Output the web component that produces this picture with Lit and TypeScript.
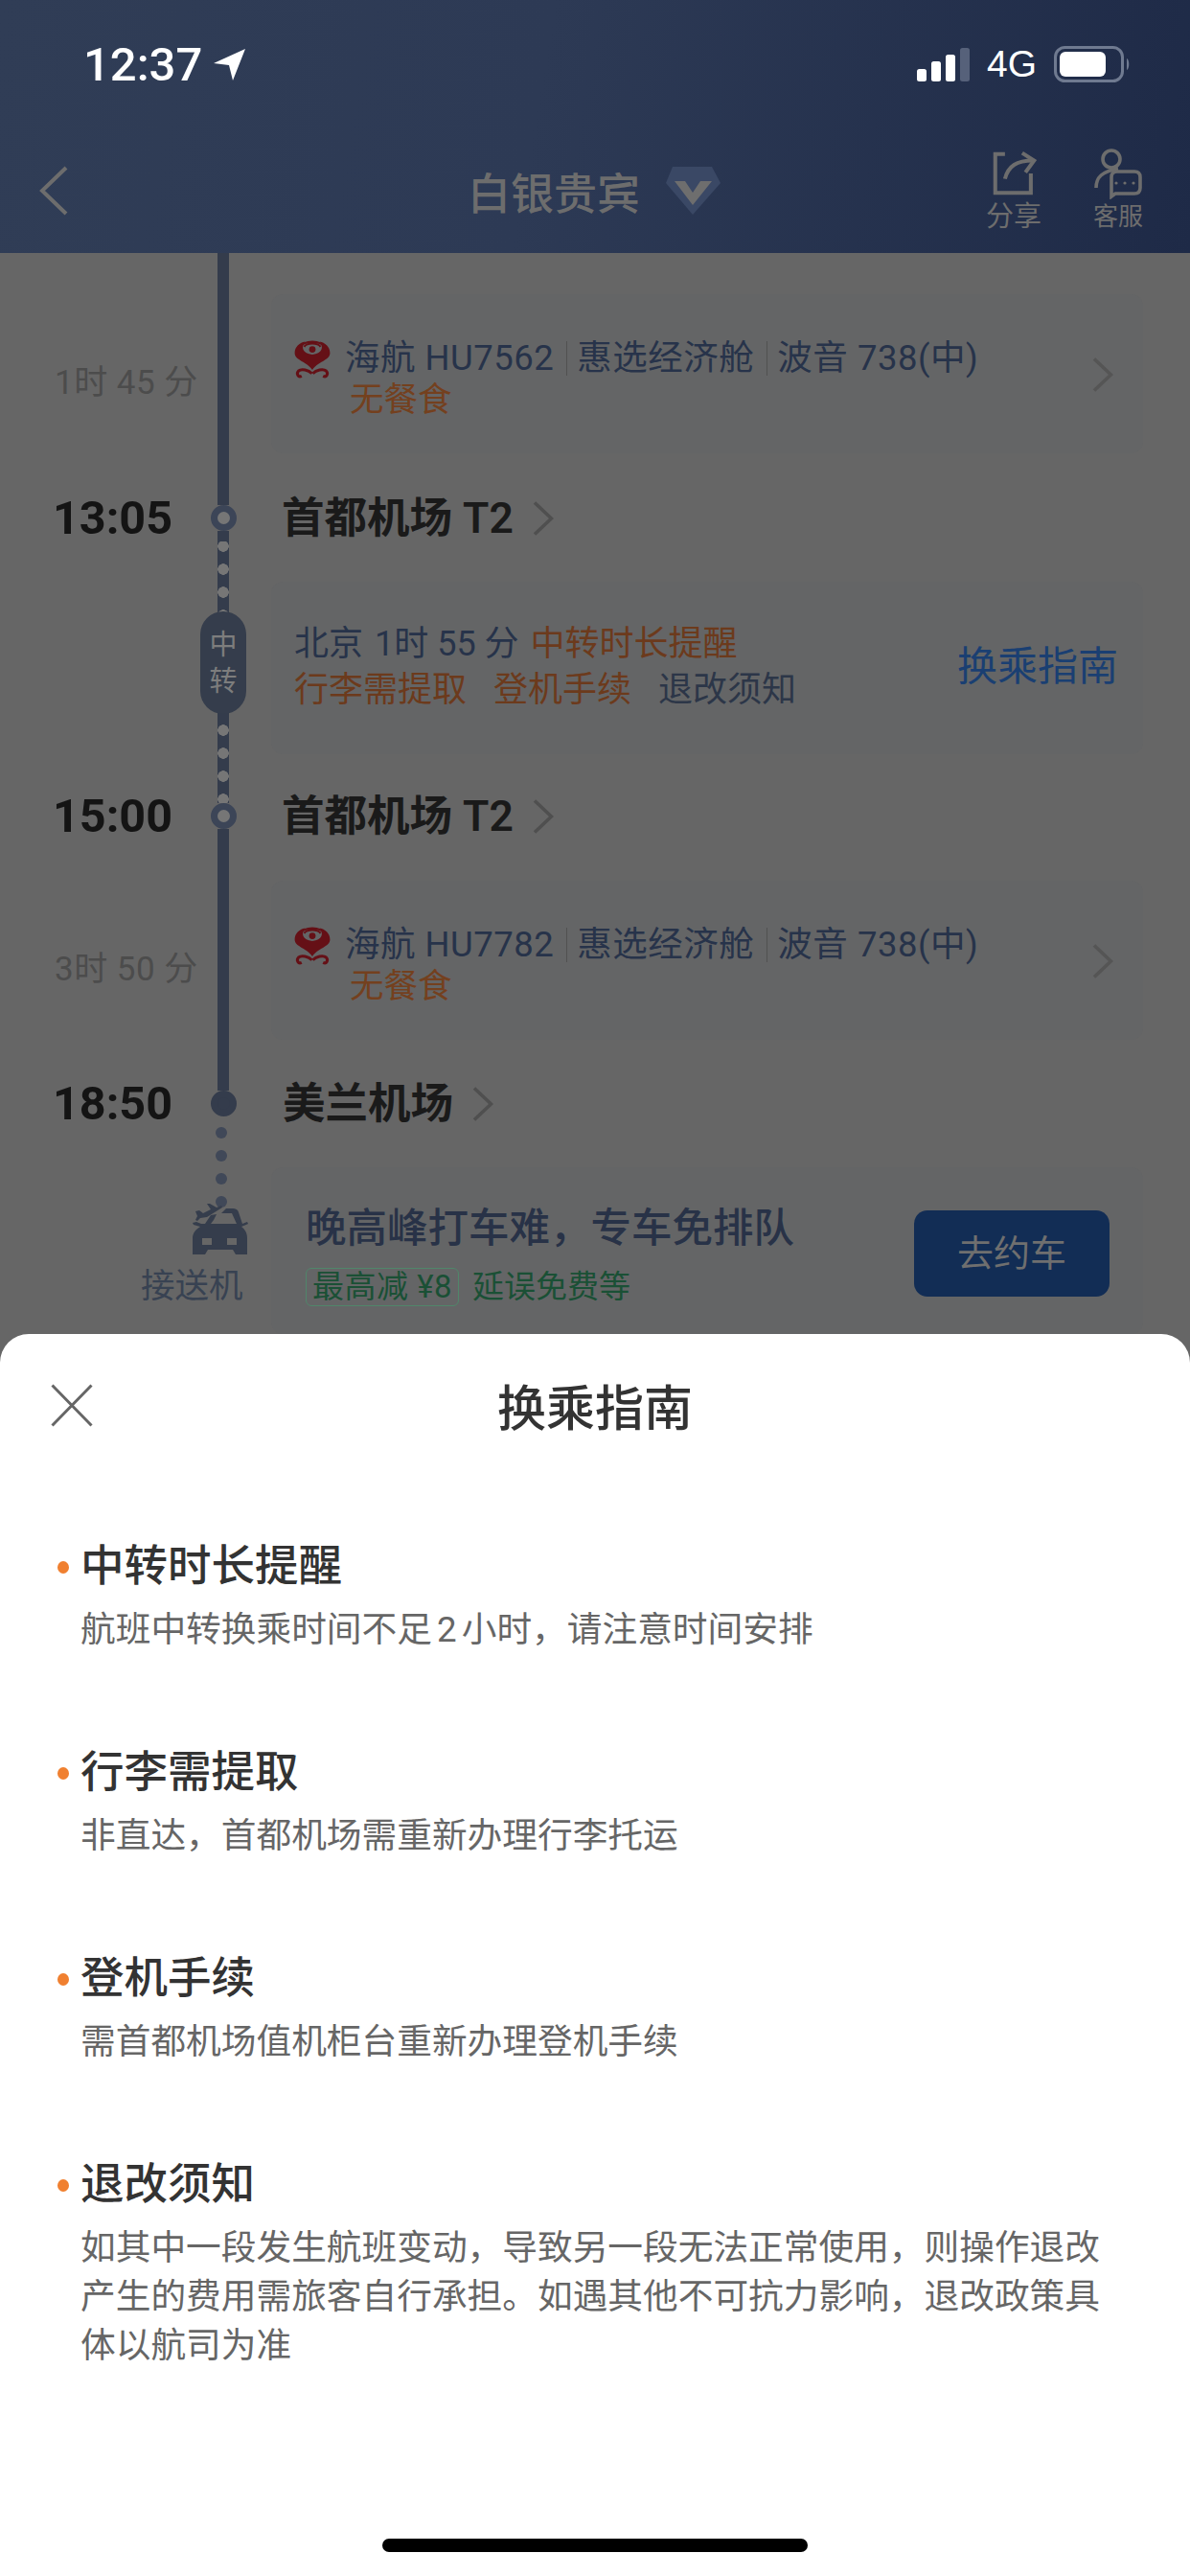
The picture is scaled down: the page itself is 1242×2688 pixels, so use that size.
import { LitElement, html, css, svg } from "lit";
import { customElement } from "lit/decorators.js";

const logo = html`<svg class="logo" viewBox="8 2 41 49">
  <g fill="#651016">
    <circle cx="28.5" cy="16" r="3.8" />
    <path d="M8 20C8 13 14 8 20 7 15 13 17 21 28.5 22 40 21 42 13 37 7 43 8 49 13 49 20 49 29 34 30 28.5 40 23 30 8 29 8 20Z" />
  </g>
  <g fill="none" stroke="#651016">
    <path d="M14 14C17 5 40 5 43 14" stroke-width="2.600" />
    <path d="M19 13C22 8 35 8 38 13" stroke-width="2.200" />
    <path d="M28 44C24 40 16 38 12.500 41 9.500 44 12 49 16 47" stroke-width="3.400" />
    <path d="M29 44C33 40 41 38 44.500 41 47.500 44 45 49 41 47" stroke-width="3.400" />
  </g>
</svg>`;

const chevron = (w: number, h: number, c = "#4f4f4f") => html`<svg class="chev" width=${w} height=${h} viewBox="0 0 22 36">
  <path d="M2 1.500 19.500 18 2 34.500" fill="none" stroke=${c} stroke-width="3.600" />
</svg>`;

const carIcon = html`<svg class="car" width="80" height="80" viewBox="0 0 80 80">
  <path fill="#353d4c" fill-rule="evenodd" d="M11 69V52C11 47 14 43 19 40L12 38 11 36 15 35 20 37 24 37 30 28 36 27 33 33 30 37H57L52 26 41 26 46 21H53C56 21 58 22 59 25L63 37 68 35 69 37 62 40C66 43 68 47 68 52V69H56L53 64H27L24 69ZM21 52H31V59H21ZM47 52H57V59H47Z" />
  <path fill="#353d4c" d="M14 24 18 23 22 26 30 22 26 16H29L36 20 41 18 42 20 26 30 19 31 16 34 14 33 16 29Z" />
</svg>`;

const signal = svg`<rect x="0" y="22" width="10" height="13" rx="2.500" fill="#fff" />
  <rect x="15" y="14" width="10" height="21" rx="2.500" fill="#fff" />
  <rect x="30" y="7" width="10" height="28" rx="2.500" fill="#fff" />
  <rect x="45" y="0" width="10" height="35" rx="2.500" fill="#56617a" />`;

@customElement("app-root")
export class AppRoot extends LitElement {
  static styles = css`
    :host {
      display: block;
      font-family: Roboto, "Noto Sans CJK SC", sans-serif;
    }
    .page {
      position: relative;
      height: 2688px;
      overflow: hidden;
      background: #666;
    }
    header {
      height: 264px;
      background: linear-gradient(100deg, #303d56 0%, #2d3a55 45%, #1e2a47 100%);
    }
    .status {
      height: 134px;
      padding: 0 62px 0 87px;
      display: flex;
      align-items: center;
      justify-content: space-between;
      color: #fff;
    }
    .clock {
      display: flex;
      align-items: center;
      gap: 12px;
      font: 500 49px Roboto, sans-serif;
    }
    .signals {
      display: flex;
      align-items: center;
      gap: 18px;
    }
    .net {
      font: 39px "Liberation Sans", sans-serif;
    }
    nav {
      height: 130px;
      display: grid;
      grid-template-columns: 1fr auto 1fr;
      align-items: center;
      padding: 0 48px 0 41px;
      color: #6d6d6d;
    }
    .heading {
      display: flex;
      align-items: center;
      gap: 26px;
      padding-left: 5px;
      font-size: 45px;
      font-weight: 500;
    }
    .actions {
      display: flex;
      justify-content: flex-end;
      gap: 53px;
    }
    .action {
      display: flex;
      flex-direction: column;
      align-items: center;
      font-size: 29px;
      line-height: 36px;
    }
    .action.narrow {
      font-size: 26px;
    }
    .action svg {
      height: 54px;
      display: block;
    }
    .seg,
    .row {
      display: grid;
      grid-template-columns: 209px 48px 1fr;
    }
    .seg {
      padding-right: 49px;
    }
    .s1 {
      height: 251px;
    }
    .s2 {
      height: 261px;
    }
    .s3 {
      height: 250px;
    }
    .rail {
      position: relative;
      display: flex;
      flex-direction: column;
      align-items: center;
    }
    .bar {
      width: 12px;
      flex: 1;
      background: #343c4c;
    }
    .bar.dots {
      background: radial-gradient(circle at 6px 12px, #767676 5.500px, transparent 6px) 0 -7px / 12px 24px, #343c4c;
    }
    .bar.lead {
      background-position: 0 -4px, 0 0;
    }
    .bar.none {
      background: none;
    }
    .node {
      width: 27px;
      height: 27px;
      box-sizing: border-box;
      border: 7px solid #3c4557;
      border-radius: 50%;
      background: #767676;
    }
    .node.end {
      background: #343c4c;
      border-color: #343c4c;
    }
    .pill {
      position: absolute;
      top: 73px;
      left: 0;
      width: 48px;
      height: 107px;
      border-radius: 24px;
      background: #353d4c;
      color: #7d7d7d;
      font-size: 29px;
      line-height: 38px;
      text-align: center;
      display: flex;
      flex-direction: column;
      justify-content: center;
    }
    .duration {
      padding: 12px 0 0 57px;
      align-self: center;
      font-size: 35px;
      letter-spacing: 0.5px;
      color: #4c4c4c;
      white-space: pre;
    }
    .card {
      margin: 43px 0 0 26px;
      border-radius: 12px;
      background: #646566;
      display: flex;
    }
    .flight {
      height: 166px;
      padding: 45px 31px 0 23px;
      box-sizing: border-box;
      justify-content: space-between;
    }
    .chev {
      display: block;
      flex: none;
    }
    .flight .chev {
      margin-top: 21px;
    }
    .flight-line {
      display: flex;
      align-items: center;
      font-size: 36.500px;
      letter-spacing: 0.5px;
      line-height: 42px;
      color: #27334a;
    }
    .logo {
      width: 40px;
      height: 44px;
      margin-right: 14px;
    }
    .flight-line span + span {
      margin-left: 13px;
      padding-left: 10px;
      border-left: 1px solid #515151;
      line-height: 36px;
    }
    .meal {
      margin-left: 59px;
      font-size: 35.500px;
      line-height: 42px;
      color: #74401e;
    }
    .transfer {
      height: 180px;
      margin-top: 42px;
      padding: 41px 26px 0 24px;
      box-sizing: border-box;
      justify-content: space-between;
    }
    .transfer p {
      margin: 0;
      display: flex;
      gap: 28px;
      font-size: 36px;
      line-height: 48px;
      white-space: pre;
      color: #27334a;
    }
    .transfer p.tight {
      gap: 12px;
    }
    .warn {
      color: #6c3a1c;
    }
    .note {
      color: #2c3648;
    }
    .guide {
      font-size: 42px;
      line-height: 96px;
      color: #1a3f72;
    }
    .row {
      height: 50px;
      align-items: stretch;
    }
    .row .rail {
      height: 50px;
    }
    .time {
      padding-left: 55px;
      font-size: 48.500px;
      font-weight: 700;
      line-height: 52px;
      color: #141414;
    }
    .place {
      display: flex;
      align-items: center;
      gap: 20px;
      padding-left: 37px;
      font-size: 44.500px;
      font-weight: 600;
      line-height: 52px;
      color: #1a1a1a;
    }
    .place.last {
      padding-left: 38px;
    }
    .pickup {
      display: grid;
      grid-template-columns: 257px 1fr;
      height: 216px;
      padding-right: 49px;
      overflow: hidden;
    }
    .transport {
      display: flex;
      flex-direction: column;
      align-items: flex-start;
    }
    .dot {
      width: 12px;
      height: 12px;
      margin: 0 0 12px 225px;
      border-radius: 50%;
      background: #404858;
    }
    .car {
      margin: -32px 0 0 190px;
      display: block;
    }
    .transport span {
      margin: -3px 0 0 147px;
      font-size: 35.500px;
      line-height: 50px;
      color: #384252;
    }
    .ride {
      margin: 42px 0 0 26px;
      padding: 37px 35px 0 36px;
      justify-content: space-between;
    }
    .ride h3 {
      margin: 0 0 14px;
      font-size: 42.500px;
      font-weight: 500;
      line-height: 54px;
      color: #283247;
    }
    .perks {
      display: flex;
      align-items: center;
      gap: 14px;
      font-size: 33px;
      line-height: 40px;
      color: #1a5035;
    }
    .tag {
      padding: 0 6px;
      border: 1px solid #50866a;
      border-radius: 6px;
      font-size: 33px;
      letter-spacing: 0.5px;
      line-height: 38px;
    }
    .go {
      width: 204px;
      height: 90px;
      margin-top: 8px;
      border-radius: 14px;
      background: #122d55;
      color: #6f6f6f;
      font-size: 38px;
      line-height: 90px;
      text-align: center;
    }
    .sheet {
      position: absolute;
      top: 1392px;
      left: 0;
      right: 0;
      bottom: 0;
      border-radius: 30px 30px 0 0;
      background: #fff;
    }
    .sheet-head {
      position: relative;
      height: 148px;
      display: flex;
      align-items: center;
      justify-content: center;
      font-size: 51px;
      font-weight: 500;
      color: #333;
    }
    .close {
      position: absolute;
      left: 53px;
      top: 52px;
    }
    .tips {
      display: flex;
      flex-direction: column;
      gap: 94px;
      padding: 65px 81px 0 60px;
    }
    .tip {
      display: grid;
      grid-template-columns: 24px 1fr;
      align-items: center;
    }
    .bullet {
      width: 12px;
      height: 13px;
      margin-bottom: 10px;
      border-radius: 50%;
      background: #f08030;
    }
    .tip h4 {
      margin: 0 0 10px;
      font-size: 45.500px;
      font-weight: 500;
      line-height: 60px;
      color: #333;
    }
    .tip p {
      grid-column: 2;
      margin: 0;
      font-size: 36.700px;
      word-spacing: -4px;
      line-height: 51px;
      color: #666;
    }
    .home {
      position: absolute;
      left: 399px;
      bottom: 25px;
      width: 444px;
      height: 14px;
      border-radius: 7px;
      background: #000;
    }
  `;

  private tips = [
    { title: "中转时长提醒", text: "航班中转换乘时间不足 2 小时，请注意时间安排" },
    { title: "行李需提取", text: "非直达，首都机场需重新办理行李托运" },
    { title: "登机手续", text: "需首都机场值机柜台重新办理登机手续" },
    {
      title: "退改须知",
      text: "如其中一段发生航班变动，导致另一段无法正常使用，则操作退改产生的费用需旅客自行承担。如遇其他不可抗力影响，退改政策具体以航司为准",
    },
  ];

  private flight(cls: string, duration: string, no: string) {
    return html`<div class="seg ${cls}">
      <div class="duration">${duration}</div>
      <div class="rail"><div class="bar"></div></div>
      <div class="card flight">
        <div>
          <div class="flight-line">
            ${logo}
            <span>海航 ${no}</span><span>惠选经济舱</span><span>波音 738(中)</span>
          </div>
          <div class="meal">无餐食</div>
        </div>
        ${chevron(22, 36, "#555")}
      </div>
    </div>`;
  }

  private stop(time: string, place: string, node = "", top = "", bottom = "", placeCls = "") {
    return html`<div class="row">
      <div class="time">${time}</div>
      <div class="rail">
        <div class="bar ${top}"></div>
        <div class="node ${node}"></div>
        <div class="bar ${bottom}"></div>
      </div>
      <div class="place ${placeCls}">${place}${chevron(22, 36)}</div>
    </div>`;
  }

  render() {
    return html`<div class="page">
      <header>
        <div class="status">
          <div class="clock">
            12:37
            <svg width="33" height="33" viewBox="0 0 33 33"><path fill="#fff" d="M33 0 20 33 16 17 0 15Z" /></svg>
          </div>
          <div class="signals">
            <svg width="55" height="35" viewBox="0 0 55 35">${signal}</svg>
            <span class="net">4G</span>
            <svg width="80" height="38" viewBox="0 0 80 38">
              <rect x="1.500" y="1.500" width="70" height="35" rx="10" fill="none" stroke="#6f7a90" stroke-width="3" />
              <rect x="6" y="6" width="48" height="26" rx="6" fill="#fff" />
              <path d="M76 13C79 14 79 24 76 25Z" fill="#6f7a90" />
            </svg>
          </div>
        </div>
        <nav>
          <svg width="30" height="52" viewBox="0 0 30 52">
            <path d="M28 2 3 26 28 50" fill="none" stroke="#6d6d6d" stroke-width="4" />
          </svg>
          <div class="heading">
            白银贵宾
            <svg width="58" height="52" viewBox="16 12 58 52">
              <path fill="#3a4865" d="M24 13H65L74 30 45 63 17 30Z" />
              <path fill="#6e6e6e" d="M26 28H37L45 40 53 28H65L45 53Z" />
            </svg>
          </div>
          <div class="actions">
            <div class="action">
              <svg viewBox="12 9 46 48" fill="none" stroke="#6d6d6d" stroke-width="3.600">
                <path d="M27 15H18V51H51V33" />
                <path d="M27 38C30 26 38 21 53 21" />
                <path d="M43 14 54 21 46 32" />
              </svg>
              分享
            </div>
            <div class="action narrow">
              <svg viewBox="118 10 54 54" fill="none" stroke="#6d6d6d" stroke-width="3.600">
                <circle cx="138" cy="22" r="9" />
                <path d="M122 52C122 41 128 35 145 32" />
                <path d="M138 61V41C138 37 140 35 144 35H162C166 35 168 37 168 41V52C168 56 166 58 162 58H142Z" />
                <circle cx="143" cy="47" r="1.600" fill="#6d6d6d" stroke="none" />
                <circle cx="152" cy="47" r="1.600" fill="#6d6d6d" stroke="none" />
                <circle cx="161" cy="47" r="1.600" fill="#6d6d6d" stroke="none" />
              </svg>
              客服
            </div>
          </div>
        </nav>
      </header>

      ${this.flight("s1", "1时 45 分", "HU7562")}
      ${this.stop("13:05", "首都机场 T2")}

      <div class="seg s2">
        <div></div>
        <div class="rail">
          <div class="bar dots"></div>
          <div class="pill"><span>中</span><span>转</span></div>
        </div>
        <div class="card transfer">
          <div>
            <p class="tight"><span>北京</span><span>1时 55 分</span><span class="warn">中转时长提醒</span></p>
            <p><span class="warn">行李需提取</span><span class="warn">登机手续</span><span class="note">退改须知</span></p>
          </div>
          <div class="guide">换乘指南</div>
        </div>
      </div>

      ${this.stop("15:00", "首都机场 T2", "", "dots lead")}
      ${this.flight("s3", "3时 50 分", "HU7782")}
      ${this.stop("18:50", "美兰机场", "end", "", "none", "last")}

      <div class="pickup">
        <div class="transport">
          <div class="dot"></div>
          <div class="dot"></div>
          <div class="dot"></div>
          <div class="dot"></div>
          ${carIcon}
          <span>接送机</span>
        </div>
        <div class="card ride">
          <div>
            <h3>晚高峰打车难，专车免排队</h3>
            <div class="perks"><span class="tag">最高减 ¥8</span><span>延误免费等</span></div>
          </div>
          <div class="go">去约车</div>
        </div>
      </div>

      <section class="sheet">
        <div class="sheet-head">
          <svg class="close" width="44" height="45" viewBox="0 0 44 45">
            <path d="M1.500 1.500 42.500 43.500M42.500 1.500 1.500 43.500" fill="none" stroke="#666" stroke-width="3" />
          </svg>
          换乘指南
        </div>
        <div class="tips">
          ${this.tips.map(
            (t) => html`<div class="tip">
              <div class="bullet"></div>
              <h4>${t.title}</h4>
              <p>${t.text}</p>
            </div>`
          )}
        </div>
      </section>
      <div class="home"></div>
    </div>`;
  }
}
